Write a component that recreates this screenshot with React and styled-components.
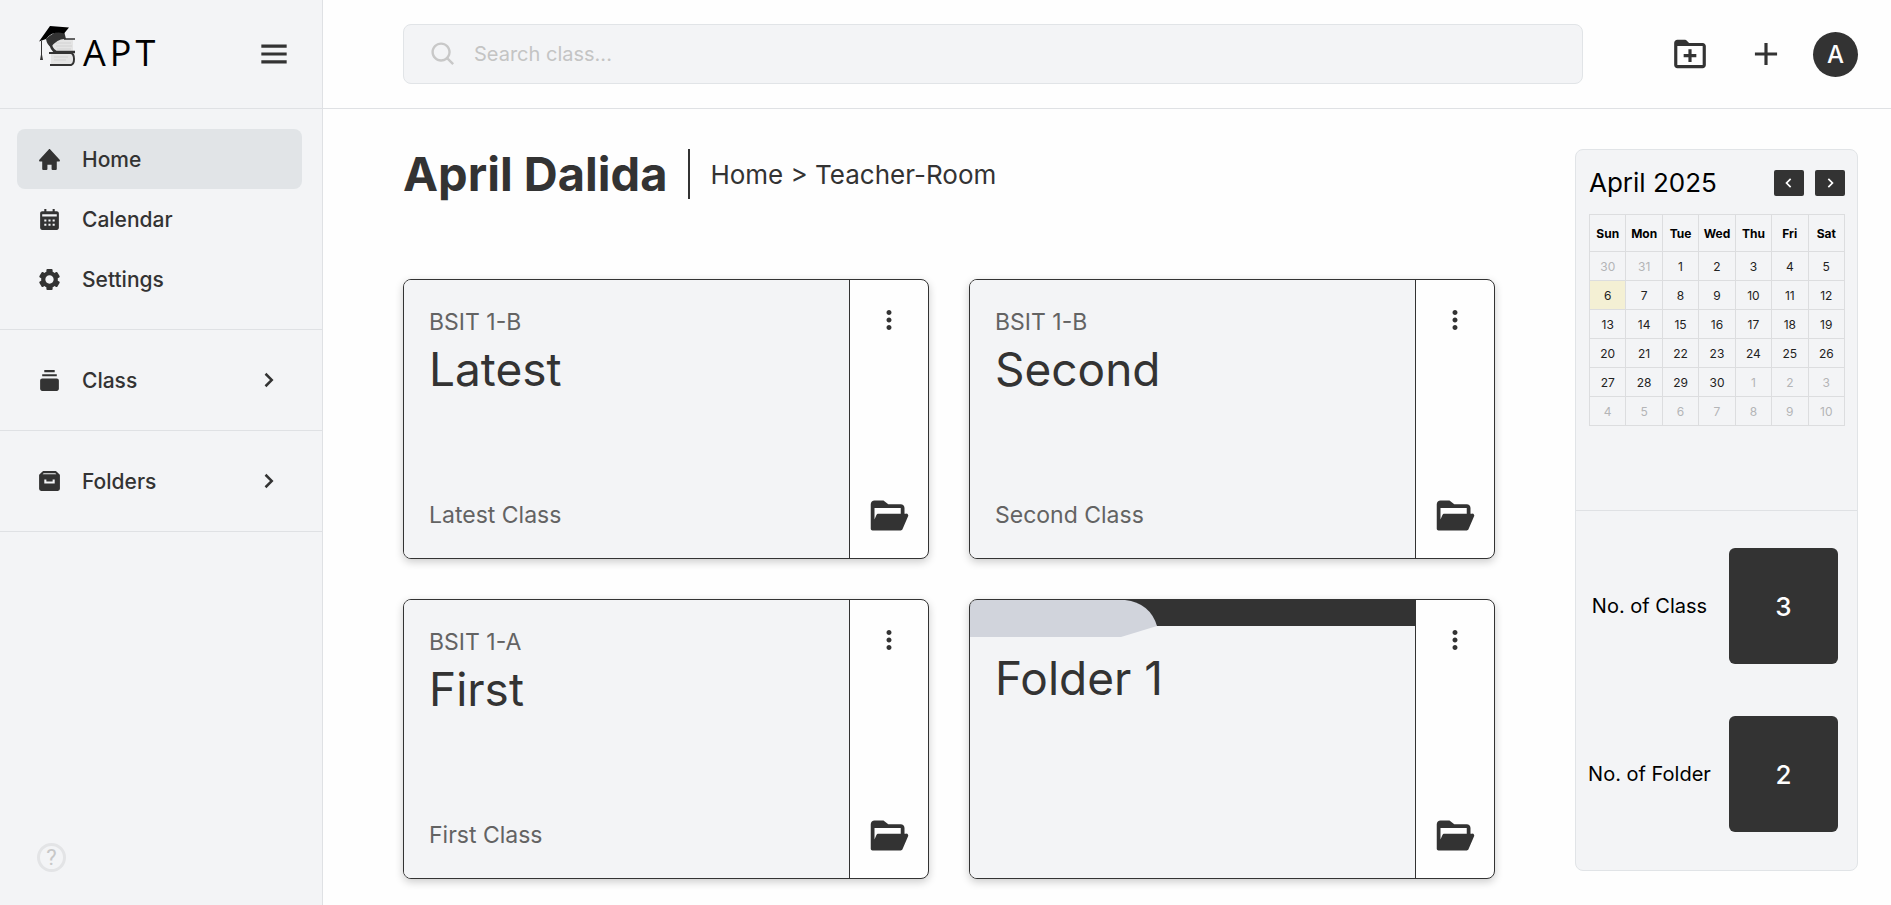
import React from "react";
import styled, { createGlobalStyle } from "styled-components";
import {
  BiMenu,
  BiSolidHome,
  BiSolidCalendar,
  BiSolidCog,
  BiSolidCollection,
  BiSolidArchive,
  BiChevronRight,
  BiChevronLeft,
  BiSearch,
  BiFolderPlus,
  BiPlus,
  BiDotsVerticalRounded,
  BiSolidFolderOpen,
} from "react-icons/bi";

const GlobalStyle = createGlobalStyle`
  *, *::before, *::after { box-sizing: border-box; }
  body {
    margin: 0;
    background: #fefefe;
    color: #333;
    font-family: Inter, "Open Sans", sans-serif;
    font-size: 20px;
  }
  button {
    border: 0;
    padding: 0;
    background: none;
    color: inherit;
    font: inherit;
    cursor: pointer;
  }
  a { color: inherit; text-decoration: none; }
  h1, h2, p, dl, dd { margin: 0; }
  svg { display: block; flex: none; }
`;

const Page = styled.div`
  display: flex;
  min-height: 100vh;
`;

const Sidebar = styled.aside`
  flex: none;
  width: 323px;
  display: flex;
  flex-direction: column;
  background: #f3f4f6;
  border-right: 1px solid #dfe1e4;
`;

const Brand = styled.div`
  height: 109px;
  padding: 0 29px 0 38px;
  display: flex;
  align-items: center;
  justify-content: space-between;
  border-bottom: 1px solid #dfe1e4;
`;

const Logo = styled.a`
  display: flex;
  align-items: flex-end;
  gap: 7px;
  padding-bottom: 16px;
`;

const Wordmark = styled.span`
  color: #000;
  font-family: "Open Sans", sans-serif;
  font-size: 36px;
  line-height: 26px;
  letter-spacing: 4px;
`;

const NavGroup = styled.nav`
  padding: 20px 20px 20px 17px;
  border-bottom: 1px solid #dfe1e4;
`;

const NavItem = styled.a`
  height: 60px;
  padding: 0 19px 0 20px;
  display: flex;
  align-items: center;
  gap: 20px;
  border-radius: 8px;
  font-size: 21px;
  font-weight: 500;
  background: ${(p) => (p.$active ? "#e1e4e7" : "transparent")};
`;

const NavLabel = styled.span`
  flex: 1;
`;

const NavArrow = styled(BiChevronRight)`
  width: 30px;
  height: 30px;
`;

const Help = styled.button`
  width: 29px;
  height: 29px;
  margin: auto 0 33px 37px;
  border: 3px solid #e3e4e6;
  border-radius: 50%;
  color: #c8c8c8;
  font-family: Roboto, sans-serif;
  font-size: 22px;
  line-height: 23px;
`;

const Main = styled.div`
  flex: 1;
  min-width: 0;
`;

const TopBar = styled.header`
  height: 109px;
  padding: 0 33px 24px 80px;
  display: flex;
  align-items: flex-end;
  gap: 88px;
  border-bottom: 1px solid #dfe1e4;
`;

const SearchBox = styled.label`
  flex: 1;
  height: 60px;
  padding: 0 25px;
  display: flex;
  align-items: center;
  gap: 16px;
  background: #f3f4f6;
  border: 1px solid #e1e4e7;
  border-radius: 8px;
  color: #c8c8c8;
`;

const SearchInput = styled.input`
  flex: 1;
  min-width: 0;
  padding: 0;
  border: 0;
  outline: 0;
  background: none;
  color: #333;
  font: inherit;
  &::placeholder { color: #c4c4c4; opacity: 1; }
`;

const Actions = styled.div`
  height: 60px;
  display: flex;
  align-items: center;
  gap: 38px;
`;

const Account = styled.div`
  display: flex;
  align-items: center;
  gap: 28px;
`;

const Avatar = styled.button`
  width: 45px;
  height: 45px;
  border-radius: 50%;
  background: #333;
  color: #fefefe;
  font-size: 24px;
  font-weight: 500;
`;

const Body = styled.div`
  padding: 40px 33px 25px 80px;
  display: flex;
  align-items: flex-start;
  gap: 80px;
`;

const Rooms = styled.main`
  flex: 1;
  min-width: 0;
`;

const Heading = styled.div`
  height: 50px;
  margin-bottom: 80px;
  display: flex;
  align-items: center;
`;

const Name = styled.h1`
  padding-right: 21px;
  font-size: 47px;
  line-height: 50px;
  font-weight: 700;
  border-right: 2px solid #333;
`;

const Crumbs = styled.nav`
  padding-left: 20px;
  font-size: 26px;
`;

const CardGrid = styled.div`
  display: grid;
  grid-template-columns: 1fr 1fr;
  gap: 40px;
`;

const Card = styled.article`
  height: 280px;
  display: flex;
  overflow: hidden;
  background: #fefefe;
  border: 1px solid #333;
  border-radius: 8px;
  box-shadow: 0 3px 8px rgba(0, 0, 0, 0.2);
`;

const CardInfo = styled.div`
  flex: 1;
  min-width: 0;
  display: flex;
  flex-direction: column;
  background: #f3f4f6;
  border-right: 1px solid #333;
`;

const CardText = styled.div`
  flex: 1;
  padding: ${(p) => (p.$folder ? "22px" : "26px")} 25px 26px;
  display: flex;
  flex-direction: column;
`;

const FolderTop = styled.div`
  height: 26px;
  background: #333;
`;

const Muted = styled.p`
  color: #636363;
  font-size: 23px;
  line-height: 33px;
  &:last-child { margin-top: auto; }
`;

const CardTitle = styled.h2`
  font-size: 46px;
  font-weight: 400;
  line-height: 60px;
`;

const CardSide = styled.div`
  width: 78px;
  padding: 25px 0 20px;
  display: flex;
  flex-direction: column;
  align-items: center;
  justify-content: space-between;
`;

const Panel = styled.aside`
  flex: none;
  width: 283px;
  background: #f3f4f6;
  border: 1px solid #e1e4e7;
  border-radius: 8px;
`;

const CalendarBox = styled.section`
  height: 361px;
  padding: 20px 12px 0 13px;
  border-bottom: 1px solid #dfe1e4;
`;

const CalendarHead = styled.div`
  height: 26px;
  margin-bottom: 18px;
  display: flex;
  align-items: center;
  gap: 11px;
`;

const Month = styled.h2`
  flex: 1;
  color: #000;
  font-size: 26px;
  font-weight: 400;
  line-height: 28px;
`;

const MonthButton = styled.button`
  width: 30px;
  height: 26px;
  display: grid;
  place-items: center;
  border-radius: 2px;
  background: #333;
  color: #fefefe;
`;

const Days = styled.table`
  width: 100%;
  table-layout: fixed;
  border-collapse: collapse;
  font-size: 12px;
  th, td {
    padding: 0;
    border: 1px solid #dcdddf;
    text-align: center;
  }
  th { height: 37px; color: #000; font-weight: 700; }
`;

const Day = styled.td`
  height: 29px;
  color: ${(p) => (p.$outside ? "#b4b5b7" : "#222")};
  background: ${(p) => (p.$today ? "#f4f0d4" : "transparent")};
`;

const Stats = styled.dl`
  padding: 37px 19px 38px 12px;
  display: grid;
  gap: 52px;
`;

const Stat = styled.div`
  display: flex;
  align-items: center;
  gap: 18px;
  color: #000;
  dt { flex: 1; text-align: center; white-space: nowrap; }
`;

const Count = styled.dd`
  width: 109px;
  height: 116px;
  display: grid;
  place-items: center;
  border-radius: 6px;
  background: #333;
  color: #fefefe;
  font-size: 26px;
  font-weight: 500;
`;

const LogoMark = () => (
  <svg width="38" height="40" viewBox="0 0 38 40" aria-hidden="true">
    <path d="M15 13h20v12H17q-3-5-2-12z" fill="#e4e4e4" />
    <path d="M13 27h20q3 6 0 12H13z" fill="#e4e4e4" />
    <path d="M18 17h15M18 20h16M19 23h14M16 31h14M16 34h12" stroke="#d2d2d2" />
    <path d="M26 13h11" stroke="#333" strokeWidth="1.5" />
    <path d="M12 15q1 9 6 11h19" fill="none" stroke="#333" strokeWidth="2.5" />
    <path d="M11 27h22q3 1 3 6t-3 6H12" fill="none" stroke="#333" strokeWidth="2" />
    <path d="M8 13Q17 4 26 5l2 8q-8-1-15 8-4-2-5-8z" fill="#333" />
    <path d="M12 0l19 1.5-5 6Q15 4 8 13L1 15.500z" fill="#000" />
    <path d="M3.500 15v16" stroke="#333" />
    <path d="M3.500 26l1.500 8H2z" fill="#333" />
  </svg>
);

const FolderTab = () => (
  <svg width="188" height="38" viewBox="0 0 188 38" aria-hidden="true">
    <path d="M0 0h155q25 3 32 26l-36 11H0z" fill="#d1d4dc" />
  </svg>
);

const rooms = [
  { section: "BSIT 1-B", title: "Latest", note: "Latest Class" },
  { section: "BSIT 1-B", title: "Second", note: "Second Class" },
  { section: "BSIT 1-A", title: "First", note: "First Class" },
  { folder: true, title: "Folder 1" },
];

const weekdays = ["Sun", "Mon", "Tue", "Wed", "Thu", "Fri", "Sat"];

const weeks = Array.from({ length: 6 }, (_, w) =>
  Array.from({ length: 7 }, (_, d) => {
    const date = new Date(2025, 2, 30 + w * 7 + d);
    return { day: date.getDate(), outside: date.getMonth() !== 3 };
  })
);

const RoomCard = ({ section, title, note, folder }) => (
  <Card>
    <CardInfo>
      {folder && (
        <FolderTop>
          <FolderTab />
        </FolderTop>
      )}
      <CardText $folder={folder}>
        {section && <Muted>{section}</Muted>}
        <CardTitle>{title}</CardTitle>
        {note && <Muted>{note}</Muted>}
      </CardText>
    </CardInfo>
    <CardSide>
      <button aria-label="More options">
        <BiDotsVerticalRounded size={30} />
      </button>
      <button aria-label={"Open " + title}>
        <BiSolidFolderOpen size={45} />
      </button>
    </CardSide>
  </Card>
);

export default function App() {
  return (
    <>
      <GlobalStyle />
      <Page>
        <Sidebar>
          <Brand>
            <Logo href="#">
              <LogoMark />
              <Wordmark>APT</Wordmark>
            </Logo>
            <button aria-label="Toggle menu">
              <BiMenu size={38} />
            </button>
          </Brand>
          <NavGroup>
            <NavItem href="#" $active>
              <BiSolidHome size={25} />
              <NavLabel>Home</NavLabel>
            </NavItem>
            <NavItem href="#">
              <BiSolidCalendar size={25} />
              <NavLabel>Calendar</NavLabel>
            </NavItem>
            <NavItem href="#">
              <BiSolidCog size={25} />
              <NavLabel>Settings</NavLabel>
            </NavItem>
          </NavGroup>
          <NavGroup>
            <NavItem href="#">
              <BiSolidCollection size={25} />
              <NavLabel>Class</NavLabel>
              <NavArrow />
            </NavItem>
          </NavGroup>
          <NavGroup>
            <NavItem href="#">
              <BiSolidArchive size={25} />
              <NavLabel>Folders</NavLabel>
              <NavArrow />
            </NavItem>
          </NavGroup>
          <Help aria-label="Help">?</Help>
        </Sidebar>
        <Main>
          <TopBar>
            <SearchBox>
              <BiSearch size={29} />
              <SearchInput type="text" placeholder="Search class..." aria-label="Search class" />
            </SearchBox>
            <Actions>
              <button aria-label="New folder">
                <BiFolderPlus size={38} />
              </button>
              <Account>
                <button aria-label="New class">
                  <BiPlus size={38} />
                </button>
                <Avatar>A</Avatar>
              </Account>
            </Actions>
          </TopBar>
          <Body>
            <Rooms>
              <Heading>
                <Name>April Dalida</Name>
                <Crumbs>
                  <a href="#">Home</a> &gt; <a href="#">Teacher-Room</a>
                </Crumbs>
              </Heading>
              <CardGrid>
                {rooms.map((room) => (
                  <RoomCard key={room.title} {...room} />
                ))}
              </CardGrid>
            </Rooms>
            <Panel>
              <CalendarBox>
                <CalendarHead>
                  <Month>April 2025</Month>
                  <MonthButton aria-label="Previous month">
                    <BiChevronLeft size={20} />
                  </MonthButton>
                  <MonthButton aria-label="Next month">
                    <BiChevronRight size={20} />
                  </MonthButton>
                </CalendarHead>
                <Days>
                  <thead>
                    <tr>
                      {weekdays.map((d) => (
                        <th key={d} scope="col">{d}</th>
                      ))}
                    </tr>
                  </thead>
                  <tbody>
                    {weeks.map((week, w) => (
                      <tr key={w}>
                        {week.map(({ day, outside }) => (
                          <Day key={day} $outside={outside} $today={day === 6 && !outside}>
                            {day}
                          </Day>
                        ))}
                      </tr>
                    ))}
                  </tbody>
                </Days>
              </CalendarBox>
              <Stats>
                <Stat>
                  <dt>No. of Class</dt>
                  <Count>3</Count>
                </Stat>
                <Stat>
                  <dt>No. of Folder</dt>
                  <Count>2</Count>
                </Stat>
              </Stats>
            </Panel>
          </Body>
        </Main>
      </Page>
    </>
  );
}
